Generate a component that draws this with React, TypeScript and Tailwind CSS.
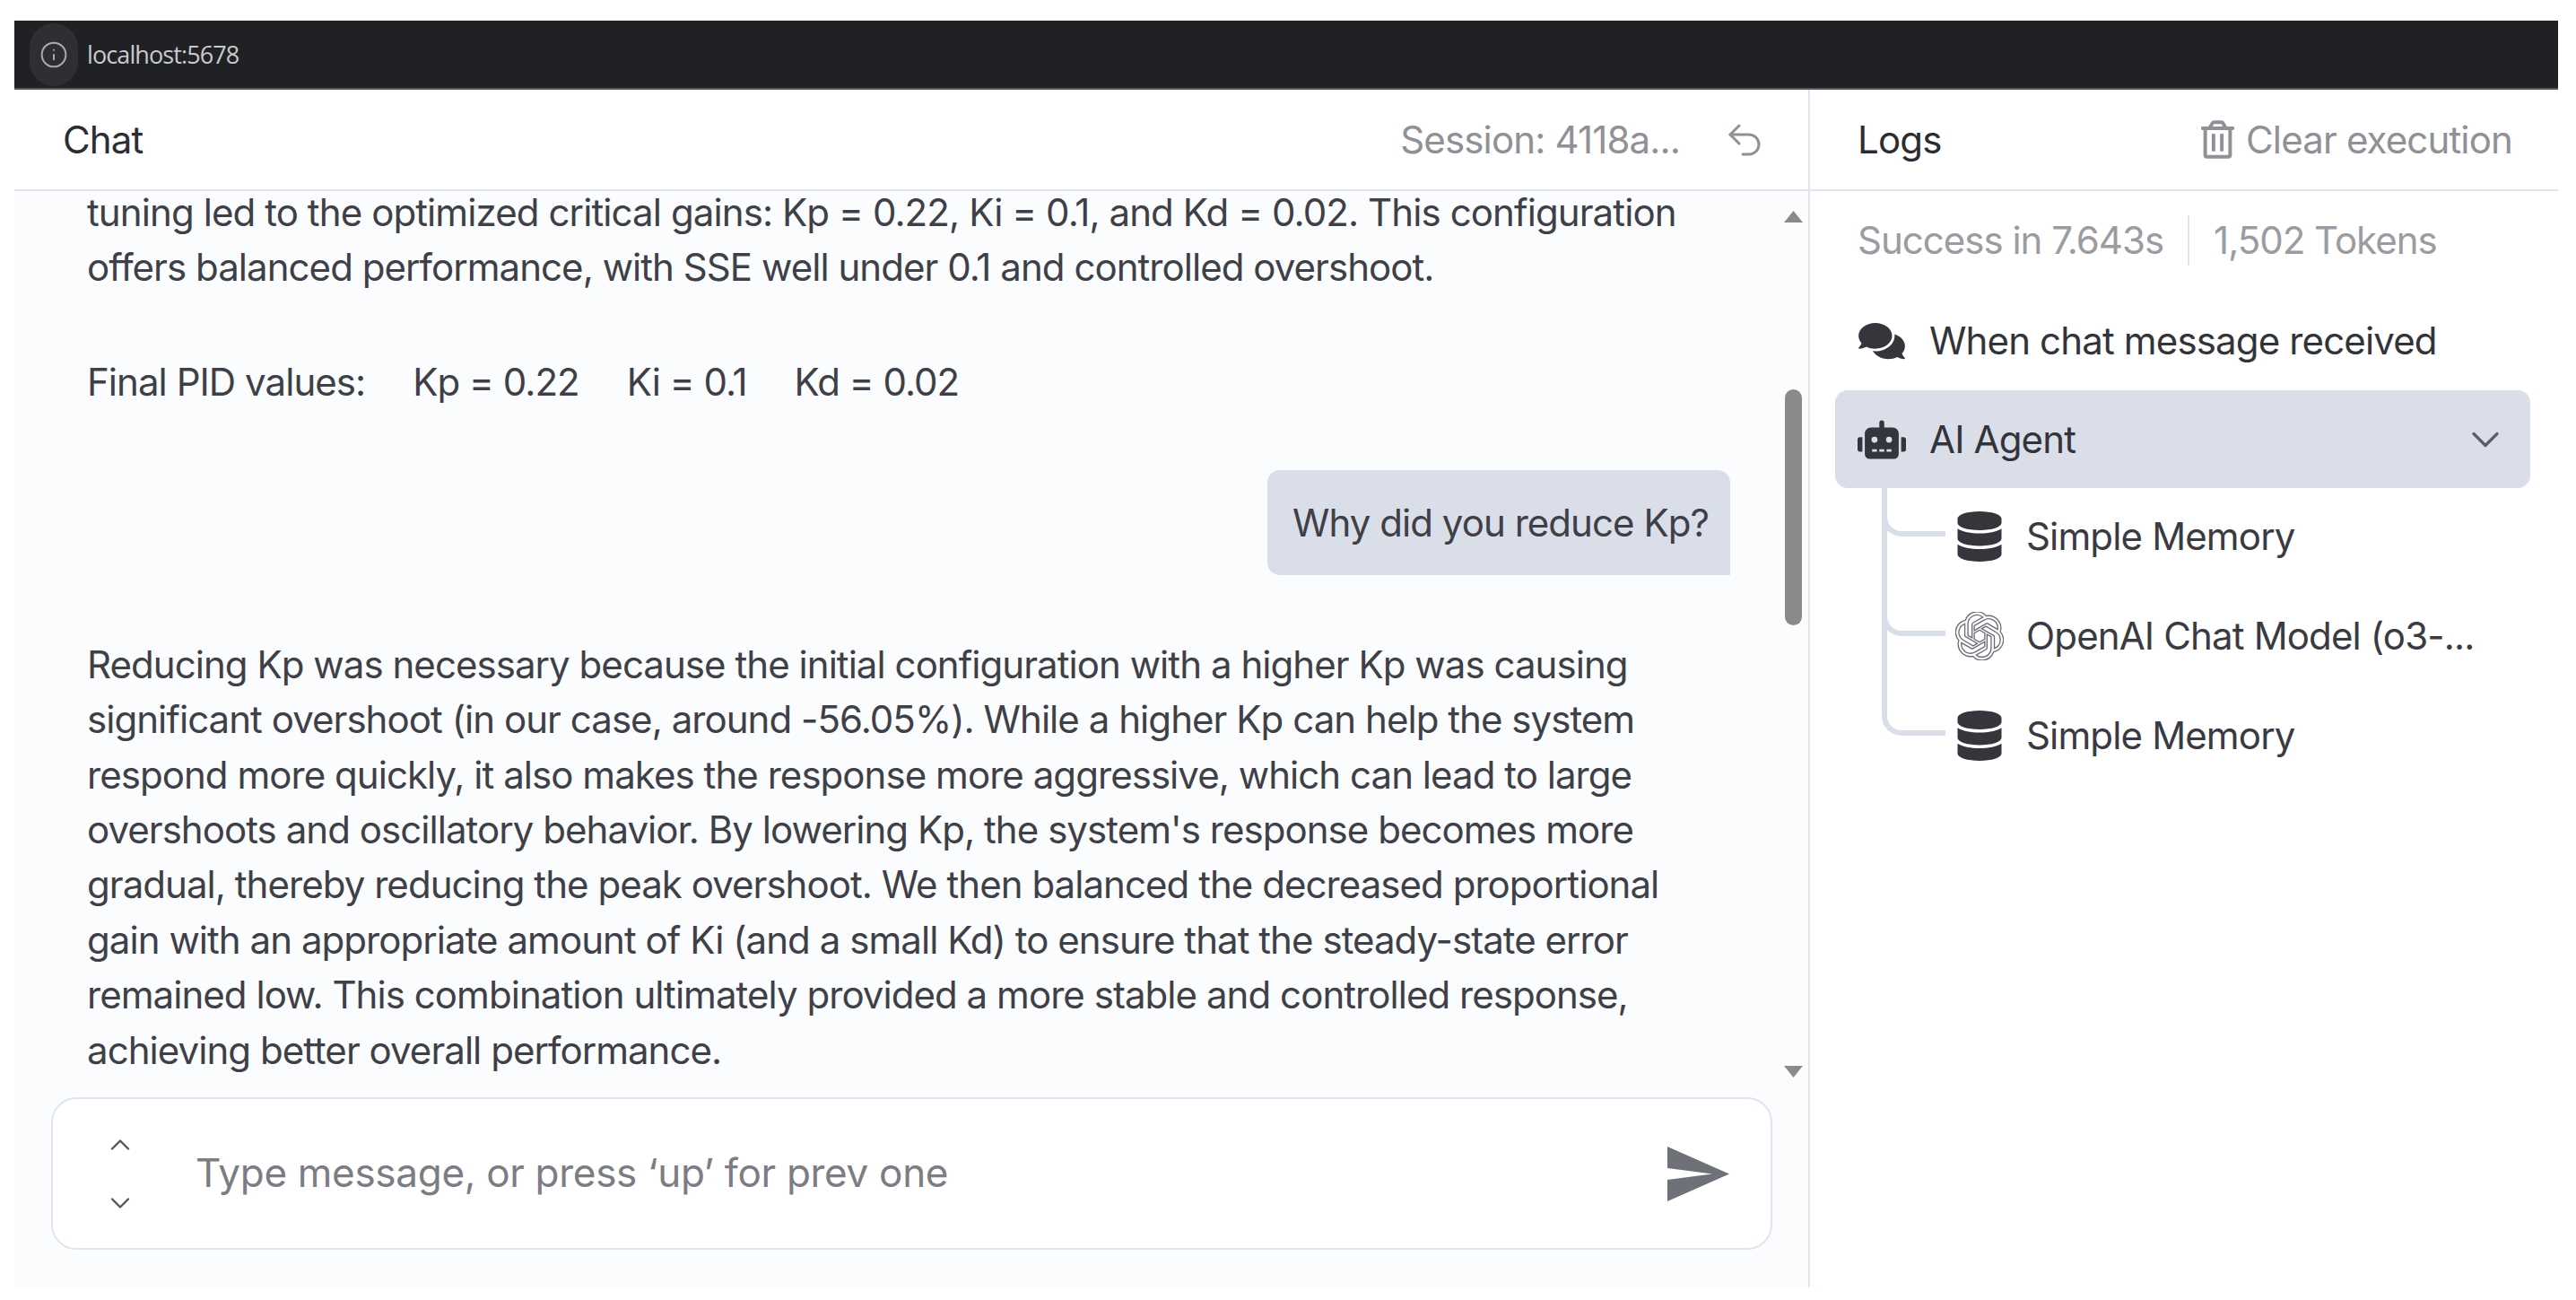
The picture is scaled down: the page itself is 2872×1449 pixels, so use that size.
import { ChevronDown, ChevronUp, Info, Undo2 } from "lucide-react";
import { FaComments, FaDatabase, FaRegTrashAlt, FaRobot } from "react-icons/fa";
import { SiOpenai } from "react-icons/si";

const replyLines = [
  "Reducing Kp was necessary because the initial configuration with a higher Kp was causing",
  "significant overshoot (in our case, around -56.05%). While a higher Kp can help the system",
  "respond more quickly, it also makes the response more aggressive, which can lead to large",
  "overshoots and oscillatory behavior. By lowering Kp, the system's response becomes more",
  "gradual, thereby reducing the peak overshoot. We then balanced the decreased proportional",
  "gain with an appropriate amount of Ki (and a small Kd) to ensure that the steady-state error",
  "remained low. This combination ultimately provided a more stable and controlled response,",
  "achieving better overall performance.",
];

function TreeRow({ label, openai, last }: { label: string; openai?: boolean; last?: boolean }) {
  return (
    <div className="relative flex h-[111px] items-center pb-[3px] pl-[160px]">
      {/* tree connector */}
      <div className="absolute left-[80px] top-0 h-[54px] w-[71px] rounded-bl-[22px] border-b-[6px] border-l-[6px] border-[#dadee9]" />
      {!last && <div className="absolute bottom-0 left-[80px] top-0 w-[6px] bg-[#dadee9]" />}
      <div className="flex w-[58px] justify-center">
        {openai ? (
          <SiOpenai className="h-[54px] w-[54px] shrink-0 fill-none text-[#6d6e75]" strokeWidth={0.6} />
        ) : (
          <FaDatabase className="h-[56px] w-[50px] shrink-0 text-[#35363b]" />
        )}
      </div>
      <span className="ml-[23px] text-[#3a3b42]">{label}</span>
    </div>
  );
}

export default function App() {
  return (
    <div className="flex h-[1449px] w-[2872px] flex-col overflow-hidden bg-white pb-[14px] pl-[16px] pr-[20px] pt-[23px] font-['Inter',sans-serif] text-[42px] leading-[61.4px] tracking-[-0.85px] text-[#3f4047]">
      {/* Browser bar */}
      <div className="flex h-[77px] shrink-0 items-center border-b-2 border-[#55565c] bg-[#202124] pl-[17px]">
        <div className="flex h-[70px] w-[54px] items-center justify-center rounded-full bg-[#2e2f32]">
          <Info className="h-[32px] w-[32px] text-[#a9abae]" strokeWidth={1.5} />
        </div>
        <span className="ml-[10px] font-['Open_Sans',sans-serif] text-[27px] leading-[30px] tracking-[-0.9px] text-[#c9cacc]">
          localhost:5678
        </span>
      </div>

      <div className="flex min-h-0 flex-1">
        {/* Chat */}
        <div className="flex w-[2002px] shrink-0 flex-col border-r-2 border-[#e0e4ef] bg-[#fbfcfe]">
          <div className="flex h-[113px] shrink-0 items-center border-b-2 border-[#e0e4ef] bg-white pl-[54px] pr-[47px]">
            <span className="text-[#2b2d33]">Chat</span>
            <span className="ml-auto text-[#8f9196]">Session: 4118a...</span>
            <Undo2 className="ml-[48px] h-[48px] w-[48px] text-[#8f9196]" strokeWidth={1.5} />
          </div>

          <div className="flex h-[1000px] shrink-0">
            <div className="min-w-0 flex-1 pl-[81px] pr-[60px] tracking-[-0.95px]">
              <div className="whitespace-nowrap">
                <div className="mb-[7px] leading-[47px] tracking-[-0.9px]">
                  tuning led to the optimized critical gains: Kp = 0.22, Ki = 0.1, and Kd = 0.02. This configuration
                </div>
                <div>offers balanced performance, with SSE well under 0.1 and controlled overshoot.</div>
                <div className="mt-[67px] flex gap-[53px]">
                  <span>Final PID values:</span>
                  <span>Kp = 0.22</span>
                  <span>Ki = 0.1</span>
                  <span>Kd = 0.02</span>
                </div>
                <div className="mt-[67px] flex justify-end">
                  <div className="flex h-[117px] w-[516px] items-center rounded-[14px] rounded-br-none bg-[#dadee9] pl-[28px]">
                    Why did you reduce Kp?
                  </div>
                </div>
                <div className="mt-[69px]">
                  {replyLines.map((line) => (
                    <div key={line}>{line}</div>
                  ))}
                </div>
              </div>
            </div>
            {/* Scrollbar */}
            <div className="mr-[6px] flex w-[21px] shrink-0 flex-col items-center">
              <svg viewBox="0 0 21 13" className="mt-[22px] h-[13px] w-[21px] fill-[#8a8a8a]">
                <polygon points="10.5,0 21,13 0,13" />
              </svg>
              <div className="mt-[186px] h-[263px] w-[19px] rounded-full bg-[#8a8a8a]" />
              <svg viewBox="0 0 21 13" className="mb-[12px] mt-auto h-[13px] w-[21px] fill-[#8a8a8a]">
                <polygon points="0,0 21,0 10.5,13" />
              </svg>
            </div>
          </div>

          {/* Input */}
          <div className="min-h-0 flex-1 pl-[41px] pr-[40px] pt-[10px]">
            <div className="flex h-[170px] items-center rounded-[28px] border-2 border-[#e0e4ef] bg-white pl-[57px] pr-[46px]">
              <div className="flex h-[101px] w-[36px] flex-col items-center justify-between text-[#55565c]">
                <ChevronUp className="h-[36px] w-[36px]" strokeWidth={1.6} />
                <ChevronDown className="h-[36px] w-[36px]" strokeWidth={1.6} />
              </div>
              <span className="ml-[66px] text-[44px] tracking-[-0.3px] text-[#7b7c84]">
                Type message, or press ‘up’ for prev one
              </span>
              <svg viewBox="0 0 69 61" className="ml-auto h-[61px] w-[69px] fill-[#6f7179]">
                <polygon points="0,0 69,30.5 0,61 0,37 50,30.5 0,24" />
              </svg>
            </div>
          </div>
        </div>

        {/* Logs */}
        <div className="flex min-w-0 flex-1 flex-col">
          <div className="flex h-[113px] shrink-0 items-center border-b-2 border-[#e0e4ef] pl-[53px] pr-[51px]">
            <span className="text-[#2b2d33]">Logs</span>
            <FaRegTrashAlt className="ml-auto h-[43px] w-[37px] text-[#8f9196]" />
            <span className="ml-[13px] text-[#8f9196]">Clear execution</span>
          </div>
          <div className="mt-[27px] flex h-[56px] shrink-0 items-center pl-[53px] tracking-[-1px] text-[#9a9ca1]">
            <span>Success in 7.643s</span>
            <div className="mx-[27px] h-[56px] w-[2px] bg-[#e0e4ef]" />
            <span>1,502 Tokens</span>
          </div>
          <div className="mt-[54px] flex h-[60px] shrink-0 items-center pl-[53px] text-[#33343a]">
            <FaComments className="h-[46px] w-[54px] text-[#35363b]" />
            <span className="ml-[26px]">When chat message received</span>
          </div>
          <div className="ml-[28px] mr-[31px] mt-[25px] flex h-[109px] shrink-0 items-center rounded-[14px] bg-[#dadee9] pl-[25px] pr-[24px] text-[#33343a]">
            <FaRobot className="h-[44px] w-[54px] text-[#35363b]" />
            <span className="ml-[26px]">AI Agent</span>
            <ChevronDown className="ml-auto h-[52px] w-[52px] text-[#5c5d64]" strokeWidth={1.5} />
          </div>
          <TreeRow label="Simple Memory" />
          <TreeRow label="OpenAI Chat Model (o3-..." openai />
          <TreeRow label="Simple Memory" last />
        </div>
      </div>
    </div>
  );
}
